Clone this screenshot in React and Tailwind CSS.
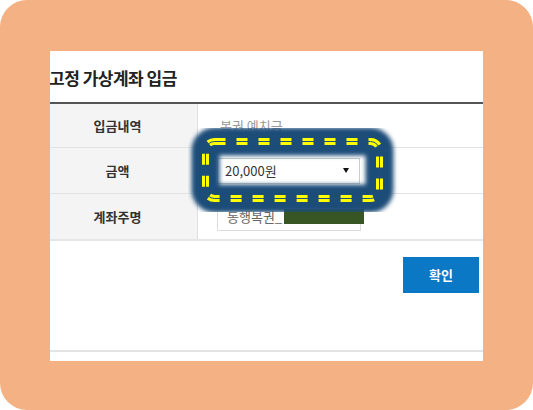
import React from 'react';

const font = { fontFamily: '"Noto Sans CJK KR", "Noto Sans", sans-serif' };

function Highlight() {
  return (
    <svg
      className="absolute left-[188px] top-[128px] pointer-events-none"
      width="212"
      height="84"
      viewBox="0 0 212 84"
    >
      <defs>
        <filter id="soft" x="-20%" y="-40%" width="140%" height="180%">
          <feGaussianBlur stdDeviation="2" />
        </filter>
      </defs>
      <rect x="17.5" y="13.5" width="174" height="57" rx="9" fill="none" stroke="#1f4e79" strokeWidth="28" filter="url(#soft)" />
      <rect x="17.5" y="13.5" width="174" height="57" rx="9" fill="none" stroke="#ffff00" strokeWidth="7" strokeDasharray="11 11" />
      <rect x="17.5" y="13.5" width="174" height="57" rx="9" fill="none" stroke="#1f4e79" strokeWidth="1" />
    </svg>
  );
}

export default function App() {
  return (
    <div className="w-[533px] h-[410px] bg-white" style={font}>
      <div className="relative w-full h-full rounded-[27px] bg-[#f4b183] pt-[51px] pl-[50px]">
        <div className="w-[433px] h-[310px] bg-white overflow-hidden flex flex-col">
          <div className="h-[53px] flex items-center border-b-2 border-[#555] shrink-0">
            <h2 className="-ml-[1px] mt-[2px] text-[17px] font-bold text-[#222] tracking-[-0.5px]">고정 가상계좌 입금</h2>
          </div>

          <div className="-ml-[12px] flex flex-col text-[13px]">
            <div className="flex h-[44px] border-b border-[#e3e3e3]">
              <div className="w-[160px] bg-[#f4f4f4] border-r border-[#e0e0e0] flex items-center justify-center font-bold text-[#333]">입금내역</div>
              <div className="flex-1 flex items-center pl-[22px] text-[#999]">복권 예치금</div>
            </div>
            <div className="flex h-[46px] border-b border-[#e3e3e3]">
              <div className="w-[160px] bg-[#f4f4f4] border-r border-[#e0e0e0] flex items-center justify-center font-bold text-[#333]">금액</div>
              <div className="flex-1 flex items-center pl-[19px]">
                <div className="w-[143px] h-[26px] border border-[#ccc] flex items-center justify-between pl-[7px] pr-[10px] text-[#333]">
                  <span>20,000원</span>
                  <span className="w-0 h-0 border-l-[3.5px] border-r-[3.5px] border-t-[5px] border-l-transparent border-r-transparent border-t-[#111]" />
                </div>
              </div>
            </div>
            <div className="flex h-[47px] border-b-2 border-[#e6e6e6]">
              <div className="w-[160px] bg-[#f4f4f4] border-r border-[#e0e0e0] flex items-center justify-center font-bold text-[#333]">계좌주명</div>
              <div className="flex-1 flex items-center pl-[19px]">
                <div className="w-[144px] h-[28px] shrink-0 border border-[#ddd] flex items-center pl-[9px] text-[#666] whitespace-nowrap">
                  <span className="shrink-0">동행복권_</span>
                  <span className="shrink-0 ml-[2px] w-[80px] h-[15px] bg-[#375623]" />
                </div>
              </div>
            </div>
          </div>

          <div className="flex justify-end pr-[4px] pt-[16px]">
            <button className="w-[76px] h-[36px] bg-[#0a78c5] text-white text-[13px] font-bold">확인</button>
          </div>

          <div className="mt-[57px] border-b-2 border-[#e3e3e3]" />
        </div>
        <Highlight />
      </div>
    </div>
  );
}
